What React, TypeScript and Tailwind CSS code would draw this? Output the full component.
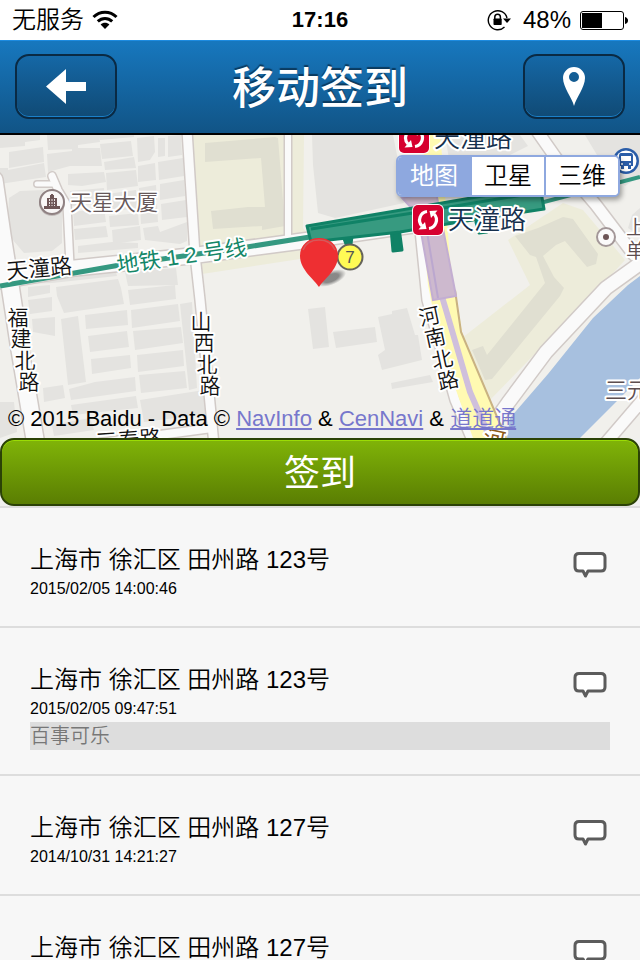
import { useState } from "react"

const checkIns = [
  { id: 1, address: "上海市 徐汇区 田州路 123号", time: "2015/02/05 14:00:46", note: "" },
  { id: 2, address: "上海市 徐汇区 田州路 123号", time: "2015/02/05 09:47:51", note: "百事可乐" },
  { id: 3, address: "上海市 徐汇区 田州路 127号", time: "2014/10/31 14:21:27", note: "" },
  { id: 4, address: "上海市 徐汇区 田州路 127号", time: "", note: "" },
]

const mapTypes = ["地图", "卫星", "三维"]

// Building footprints, grey
const buildings = [
  "0,135 40,135 40,140 25,142 25,146 0,148",
  "9,152 43,147 44,162 9,168",
  "0,168 8,168 8,170 44,163 46,177 0,184",
  "47,135 99,135 100,142 78,145 78,149 48,150",
  "47,154 72,151 72,148 100,148 102,166 70,166 48,172",
  "100,144 131,141 133,156 102,159",
  "98,135 134,135 134,137 100,140",
  "104,162 134,157 136,168 105,170",
  "68,174 104,172 106,182 82,186 68,185",
  "106,173 136,170 138,186 107,190",
  "137,138 154,136 155,152 150,160 138,162",
  "158,138 165,138 165,156 158,157",
  "168,136 181,135 182,155 168,157",
  "138,166 155,163 156,180 138,182",
  "158,162 183,158 184,176 159,180",
  "139,188 156,185 157,200 140,202",
  "160,184 184,180 185,196 160,200",
  "70,191 104,188 105,203 72,206",
  "107,194 136,190 138,208 108,212",
  "140,206 157,204 158,222 141,224",
  "161,204 186,200 187,217 162,220",
  "73,212 104,208 106,222 74,226",
  "109,216 138,213 139,225 110,227",
  "74,229 106,226 108,237 75,240",
  "112,230 140,226 141,240 113,244",
  "143,228 158,226 160,232 187,222 187,241 180,244 145,240",
  "78,246 112,242 138,243 138,248 78,253",
  "9,198 20,191 44,190 62,210 62,243 52,251 24,253 7,233",
  "28,287 50,285 50,293 28,297",
  "56,287 118,279 121,288 124,304 64,313 57,296",
  "20,278 115,268 117,276 52,283 21,284",
  "125,272 176,268 178,285 128,286",
  "28,300 52,297 52,311 30,314",
  "32,319 55,317 55,336 33,332",
  "128,290 175,285 176,299 130,305",
  "61,319 78,316 86,382 68,385",
  "85,315 127,310 128,325 86,329",
  "131,310 178,304 180,321 132,328",
  "88,336 127,331 129,347 90,352",
  "133,331 181,327 183,343 135,350",
  "91,359 130,355 131,368 92,374",
  "137,355 183,350 184,366 138,372",
  "95,382 135,377 136,391 71,400 69,389",
  "139,375 185,371 187,388 141,393",
  "180,304 192,302 197,388 189,390",
  "43,388 63,385 65,398 44,402",
  "71,405 136,396 138,408 73,415",
  "140,400 204,390 206,414 144,422",
  "0,402 14,402 17,432 0,438",
  "52,425 90,418 94,430 54,436",
  "312,135 393,135 398,160 404,203 335,218 318,213 313,165",
  "308,309 325,307 329,347 313,349",
  "333,332 375,327 377,342 336,348",
  "378,317 392,314 392,311 407,308 415,335 418,335 422,360 382,370 378,355 385,350",
  "391,383 430,375 433,382 392,389",
  "445,135 520,135 528,146 500,160 450,165",
  "585,135 640,135 640,176 625,186 600,160",
  "632,215 640,208 640,236 628,228",
]

const roads = [
  { d: "M-6 180 L2 235 L10 285 L20 350 L36 445", w: 17 },
  { d: "M0 281 L75 268 L190 256 L310 240 L420 224", w: 15 },
  { d: "M37 184 H56", w: 5 },
  { d: "M52 176 L58 190 L67 205 L70 265", w: 7 },
  { d: "M187 130 L195 255 L200 300 L214 445", w: 9 },
  { d: "M288 130 V240", w: 6 },
  { d: "M100 443 L212 428", w: 8 },
  { d: "M420 230 L427 300 L455 400 L474 445", w: 9 },
  { d: "M535 128 L556 158 L596 205 L634 255", w: 11 },
  { d: "M484 437 L508 403 L546 352 L606 288 L645 260", w: 13 },
  { d: "M604 445 L646 396", w: 11 },
]

// Street names that run downwards, one glyph at a time
const streetGlyphs = [
  ["福", 18, 317, 0],
  ["建", 21, 338, 0],
  ["北", 25, 360, 0],
  ["路", 29, 381, 0],
  ["山", 201, 321, 0],
  ["西", 204, 342, 0],
  ["北", 207, 364, 0],
  ["路", 210, 385, 0],
  ["河", 429, 316, -12],
  ["南", 435, 337, -12],
  ["北", 442, 359, -12],
  ["路", 448, 380, -12],
] as const

function MetroBadge({ x, y }: { x: number; y: number }) {
  return (
    <g transform={`translate(${x} ${y})`}>
      <rect x="-16" y="-16" width="32" height="32" rx="6" fill="#fff" />
      <rect x="-15" y="-15" width="30" height="30" rx="5" fill="#d6002f" />
      <g fill="none" stroke="#fff" strokeWidth="3.2">
        <path d="M-1 -8.5 A8.6 8.6 0 0 0 -6 6" />
        <path d="M1 8.5 A8.6 8.6 0 0 0 6 -6" />
      </g>
      <path d="M-9.5 9.5 L-1.5 9 L-3 2 Z M9.5 -9.5 L1.5 -9 L3 -2 Z" fill="#fff" />
    </g>
  )
}

function MapCanvas() {
  return (
    <svg
      viewBox="0 135 640 303"
      preserveAspectRatio="xMidYMid slice"
      className="block h-full w-full font-['Liberation_Sans','Noto_Sans_CJK_SC',sans-serif]"
      aria-label="天潼路 地图"
    >
      <rect x="0" y="135" width="640" height="303" fill="#f1f0ec" />

      {/* Compounds */}
      <g fill="#edecda">
        <path d="M192 135 H284 V238 L198 252 Z" />
        <path d="M291 135 H304 L303 228 L306 232 L291 236 Z" />
        <path d="M200 264 L300 248 L300 259 L202 274 Z" />
        <path d="M508 240 L563 203 L583 210 L625 260 L603 284 L490 400 L462 338 L530 285 Z" />
      </g>
      <g fill="#e0dfd1">
        <path d="M205 143 L275 137 L278 138 L285 226 L262 230 L262 226 L213 229 L211 211 L248 207 L265 207 L261 158 L205 162 Z" />
        <path d="M515 236 L538 228 L563 217 L573 219 L598 254 L596 264 L587 267 L565 241 L556 245 L543 256 L554 277 L564 288 L560 296 L492 379 L485 380 L472 350 L483 346 L487 355 L545 283 L536 257 L530 255 Z" />
      </g>
      <g fill="#e4e3e0">
        {buildings.map((points) => (
          <polygon key={points} points={points} />
        ))}
      </g>

      {/* River */}
      <path d="M507 438 L510 418 L548 374 L593 318 L628 285 L640 276 V378 L620 398 L580 438 Z" fill="#a7c0df" />

      {/* Roads: casing first, then the surface */}
      <g fill="none" stroke="#d1cac7" strokeLinecap="round" strokeLinejoin="round">
        {roads.map((road) => (
          <path key={road.d} d={road.d} strokeWidth={road.w + 3} />
        ))}
      </g>
      <g fill="none" stroke="#fafafa" strokeLinecap="round" strokeLinejoin="round">
        {roads.map((road) => (
          <path key={road.d} d={road.d} strokeWidth={road.w} />
        ))}
      </g>
      <path d="M426 130 L440 130 L450 260 L456 295 L462 332 L506 438 H473 L440 345 L428 285 L420 200 Z" fill="#fffab2" />
      <path d="M455 290 L461 332 L506 438" fill="none" stroke="#c9b282" strokeWidth="2" />

      {/* Line 10 and its station */}
      <path d="M440 290 L446 310 L470 392 L490 438" fill="none" stroke="#cfbfdc" strokeWidth="6" />
      <path d="M402 198 L436 192 L456 296 L433 300 L418 215 Z" fill="#cdb9ce" stroke="#c3aed2" strokeWidth="2" />
      <path d="M427 232 L438 298" stroke="#bba7cf" strokeWidth="2" />

      {/* Line 12 and its station */}
      <path d="M0 286 L120 265 L247 247 L310 237" fill="none" stroke="#349880" strokeWidth="5" />
      <path d="M540 203 L640 177" fill="none" stroke="#349880" strokeWidth="4" />
      <g stroke="#108266" strokeWidth="3" strokeLinejoin="round">
        <path d="M391 228 L393 251 L402 250 L399 228 Z M476 222 L479 233 L487 232 L486 220 Z M343 236 L346 244 H351 L352 236 Z" fill="#108266" />
        <path d="M307 226 L413 208 L540 186 L544 209 L447 224 L400 232 L311 242 Z" fill="#379a80" />
        <path d="M311 229 L413 213 L541 192" fill="none" />
      </g>

      <MetroBadge x={414} y={138} />
      <MetroBadge x={428} y={220} />

      {/* Bus stop */}
      <g>
        <circle cx="626" cy="161" r="13" fill="#2a5da8" />
        <circle cx="626" cy="161" r="10.5" fill="#fff" />
        <path d="M621 153 H631 Q633 153 633 156 V166 H631 V169 H628 V166 H624 V169 H621 V166 H619 V156 Q619 153 621 153 Z" fill="#2a5da8" />
        <path d="M621 156 H631 V161 H621 Z" fill="#fff" />
        <circle cx="622" cy="164" r="1" fill="#fff" />
        <circle cx="630" cy="164" r="1" fill="#fff" />
      </g>

      {/* Points of interest */}
      <circle cx="52" cy="203" r="13" fill="#a09494" opacity="0.5" />
      <circle cx="52" cy="202" r="12" fill="#f8f6f6" stroke="#8f8182" strokeWidth="2" />
      <path d="M44 209 V206 H47 V198 H50 V195 H51 V194 H53 V195 H54 V198 H57 V206 H60 V209 Z" fill="#6d5556" />
      <path d="M49.5 199 V206 M52 199 V206 M54.5 199 V206" stroke="#e9e3e3" strokeWidth="1" strokeDasharray="2 1" />
      <circle cx="606" cy="237" r="9" fill="#fbfafa" stroke="#a39798" strokeWidth="2" />
      <circle cx="606" cy="237" r="3" fill="#6d5556" />

      {/* Labels */}
      <g stroke="#fff" strokeWidth="4" strokeLinejoin="round" className="[paint-order:stroke]">
        <text x="70" y="210" fontSize="22" fontWeight="350" fill="#66585a">天星大厦</text>
        <text x="7" y="279" fontSize="22" fontWeight="350" fill="#111" transform="rotate(-5 7 279)">天潼路</text>
        <text x="118" y="273" fontSize="22" fill="#148768" transform="rotate(-8 118 273)">地铁 1 2 号线</text>
        <text x="434" y="147" fontSize="26" fontWeight="350" fill="#16304d">天潼路</text>
        <text x="448" y="229" fontSize="26" fontWeight="350" fill="#16304d">天潼路</text>
        <text x="605" y="398" fontSize="22" fontWeight="350" fill="#5d4e50">三元</text>
        <text x="626" y="235" fontSize="20" fontWeight="350" fill="#5d4e50">上</text>
        <text x="626" y="258" fontSize="20" fontWeight="350" fill="#5d4e50">单</text>
        <text x="96" y="450" fontSize="22" fontWeight="350" fill="#111" transform="rotate(-4 96 450)">三泰路</text>
        <text x="483" y="447" fontSize="22" fill="#8d5a18" transform="rotate(12 494 440)">河</text>
        {streetGlyphs.map(([glyph, x, y, angle]) => (
          <text
            key={`${x}-${y}`}
            x={x}
            y={y + 8}
            fontSize="21"
            fontWeight="350"
            fill="#111"
            textAnchor="middle"
            transform={`rotate(${angle} ${x} ${y})`}
          >
            {glyph}
          </text>
        ))}
      </g>

      {/* Exit 7 */}
      <circle cx="350" cy="257" r="12.5" fill="#fffa55" stroke="#66645a" strokeWidth="2" />
      <text x="350" y="263" fontSize="17" fill="#555" textAnchor="middle">7</text>

      {/* Current position */}
      <defs>
        <radialGradient id="pinShadow">
          <stop offset="0.5" stopColor="#666" stopOpacity="0.75" />
          <stop offset="1" stopColor="#666" stopOpacity="0" />
        </radialGradient>
      </defs>
      <ellipse cx="331" cy="278" rx="16" ry="7" fill="url(#pinShadow)" transform="rotate(-22 331 278)" />
      <path d="M319 287 C315 280 300 270 300 256 C300 245 308 238 319 238 C330 238 338 245 338 256 C338 270 323 280 319 287 Z" fill="#ee2f32" />
      <path d="M303 250 C306 242 312 240 319 240 C326 240 332 243 335 250" fill="none" stroke="#d5595a" strokeWidth="1.5" />
    </svg>
  )
}

function StatusBar() {
  return (
    <div className="grid h-10 shrink-0 grid-cols-[1fr_auto_1fr] items-center bg-white px-3 text-2xl leading-10 text-black">
      <div className="flex items-center gap-2">
        <span className="font-[350]">无服务</span>
        <svg width="26" height="20" viewBox="0 0 26 20" fill="none" stroke="#000" strokeWidth="3" aria-hidden="true">
          <path d="M1.5 7 C8 0.5 18 0.5 24.5 7" />
          <path d="M5.8 11.4 C10 7.4 16 7.4 20.2 11.4" />
          <path d="M8.6 14.5 C11 12 15 12 17.4 14.5 L13 19 Z" fill="#000" stroke="none" />
        </svg>
      </div>
      <span className="text-[22px] font-bold">17:16</span>
      <div className="flex items-center justify-end gap-2">
        <div className="flex items-center gap-3">
          <svg width="24" height="22" viewBox="0 0 24 22" fill="none" stroke="#000" aria-hidden="true">
            <path d="M20 9 A9.5 9.5 0 1 0 17.5 18" strokeWidth="1.4" />
            <path d="M16 9.5 H24 L20 14 Z" fill="#000" stroke="none" />
            <path d="M7.8 10 V8 A2.8 2.8 0 0 1 13.4 8 V10" strokeWidth="1.5" />
            <rect x="6.5" y="9.5" width="8.2" height="6.5" rx="0.8" fill="#000" stroke="none" />
          </svg>
          <span>48%</span>
        </div>
        <svg width="49" height="19" viewBox="0 0 49 19" aria-hidden="true">
          <rect x="1.5" y="0.5" width="43" height="18" rx="2.5" fill="none" stroke="#000" strokeWidth="1" />
          <rect x="3" y="2" width="20" height="15" fill="#000" />
          <path d="M46 6 Q49 7 49 9.5 Q49 12 46 13 Z" fill="#000" />
        </svg>
      </div>
    </div>
  )
}

const headerButton =
  "flex h-[65px] w-[102px] items-center justify-center rounded-[14px] border-2 border-[#0a2a44] bg-linear-to-b from-[#1568a6] to-[#104a75] shadow-[inset_0_-1px_0_#1b80c9]"

function Header() {
  return (
    <header className="flex h-[95px] shrink-0 items-center justify-between border-b-2 border-black bg-linear-to-b from-[#1778bf] to-[#115486] px-[15px] shadow-[inset_0_1px_0_#1d8be0]">
      <button className={headerButton} aria-label="返回">
        <svg width="40" height="35" viewBox="0 0 40 35" fill="#fff">
          <path d="M0 17.5 L20 0 V13 H40 V22 H20 V35 Z" />
        </svg>
      </button>
      <h1 className="pt-1 text-[44px] leading-[64px] font-medium text-white [text-shadow:0_-2px_1px_#0b3a5e]">移动签到</h1>
      <button className={headerButton} aria-label="定位">
        <svg width="22" height="39" viewBox="0 0 22 39" fill="#fff">
          <path
            fillRule="evenodd"
            d="M11 39 C9 31 0 20 0 11 A11 11 0 0 1 22 11 C22 20 13 31 11 39 Z M11 5 A5 5 0 1 0 11 15 A5 5 0 1 0 11 5 Z"
          />
        </svg>
      </button>
    </header>
  )
}

export default function App() {
  const [mapType, setMapType] = useState("地图")

  return (
    <div className="flex h-screen flex-col overflow-hidden bg-[#f7f7f7] font-['Liberation_Sans','Noto_Sans_CJK_SC',sans-serif] text-black">
      <StatusBar />
      <Header />

      <section className="relative h-[303px] shrink-0 overflow-hidden">
        <MapCanvas />

        {/* Map type switch */}
        <div className="absolute top-5 right-5 flex h-[42px] w-56 divide-x-2 divide-[#8ea8df] overflow-hidden rounded-md border-2 border-[#8ea8df] bg-white text-2xl shadow-[2px_3px_5px_rgba(0,0,0,0.35)]">
          {mapTypes.map((type) => (
            <button
              key={type}
              onClick={() => setMapType(type)}
              aria-pressed={type === mapType}
              className={type === mapType ? "flex-1 bg-[#8ea8df] text-white" : "flex-1 bg-white font-[350] text-black"}
            >
              {type}
            </button>
          ))}
        </div>

        <p className="absolute bottom-[7px] left-2 text-[22px] leading-6 whitespace-nowrap">
          © 2015 Baidu - Data ©{" "}
          <a href="#navinfo" className="text-[#7777cc] underline">NavInfo</a> &amp;{" "}
          <a href="#cennavi" className="text-[#7777cc] underline">CenNavi</a> &amp;{" "}
          <a href="#daodaotong" className="font-[350] text-[#7777cc] underline">道道通</a>
        </p>
      </section>

      <div className="shrink-0 bg-[#f0f0ee]">
        <button className="block h-[68px] w-full rounded-[14px] border-2 border-[#2b4206] bg-linear-to-b from-[#80b408] to-[#5a7e03] pt-1 text-4xl text-white shadow-[inset_0_1px_0_#9bdc05]">
          签到
        </button>
      </div>

      <ul className="min-h-0 flex-1 overflow-y-auto [scrollbar-width:none]">
        {checkIns.map((item) => (
          <li key={item.id} className="border-t-2 border-[#dddddd] px-[30px] pt-9 pb-6">
            <div className="flex items-start justify-between">
              <div>
                <p className="text-2xl leading-8 font-[350]">{item.address}</p>
                <p className="text-base leading-[26px]">{item.time}</p>
              </div>
              <button className="h-10 w-10" aria-label="备注">
                <svg width="40" height="40" viewBox="0 0 40 40">
                  <path
                    d="M9 9.5 H31 Q35 9.5 35 13.5 V23 Q35 27 31 27 H18 L15.5 32 L13 27 H9 Q5 27 5 23 V13.5 Q5 9.5 9 9.5 Z"
                    fill="#fff"
                    stroke="#5c5c5c"
                    strokeWidth="3"
                    strokeLinejoin="round"
                  />
                </svg>
              </button>
            </div>
            {item.note && <p className="bg-[#dddddd] text-xl leading-7 font-[350] text-[#777777]">{item.note}</p>}
          </li>
        ))}
      </ul>
    </div>
  )
}
